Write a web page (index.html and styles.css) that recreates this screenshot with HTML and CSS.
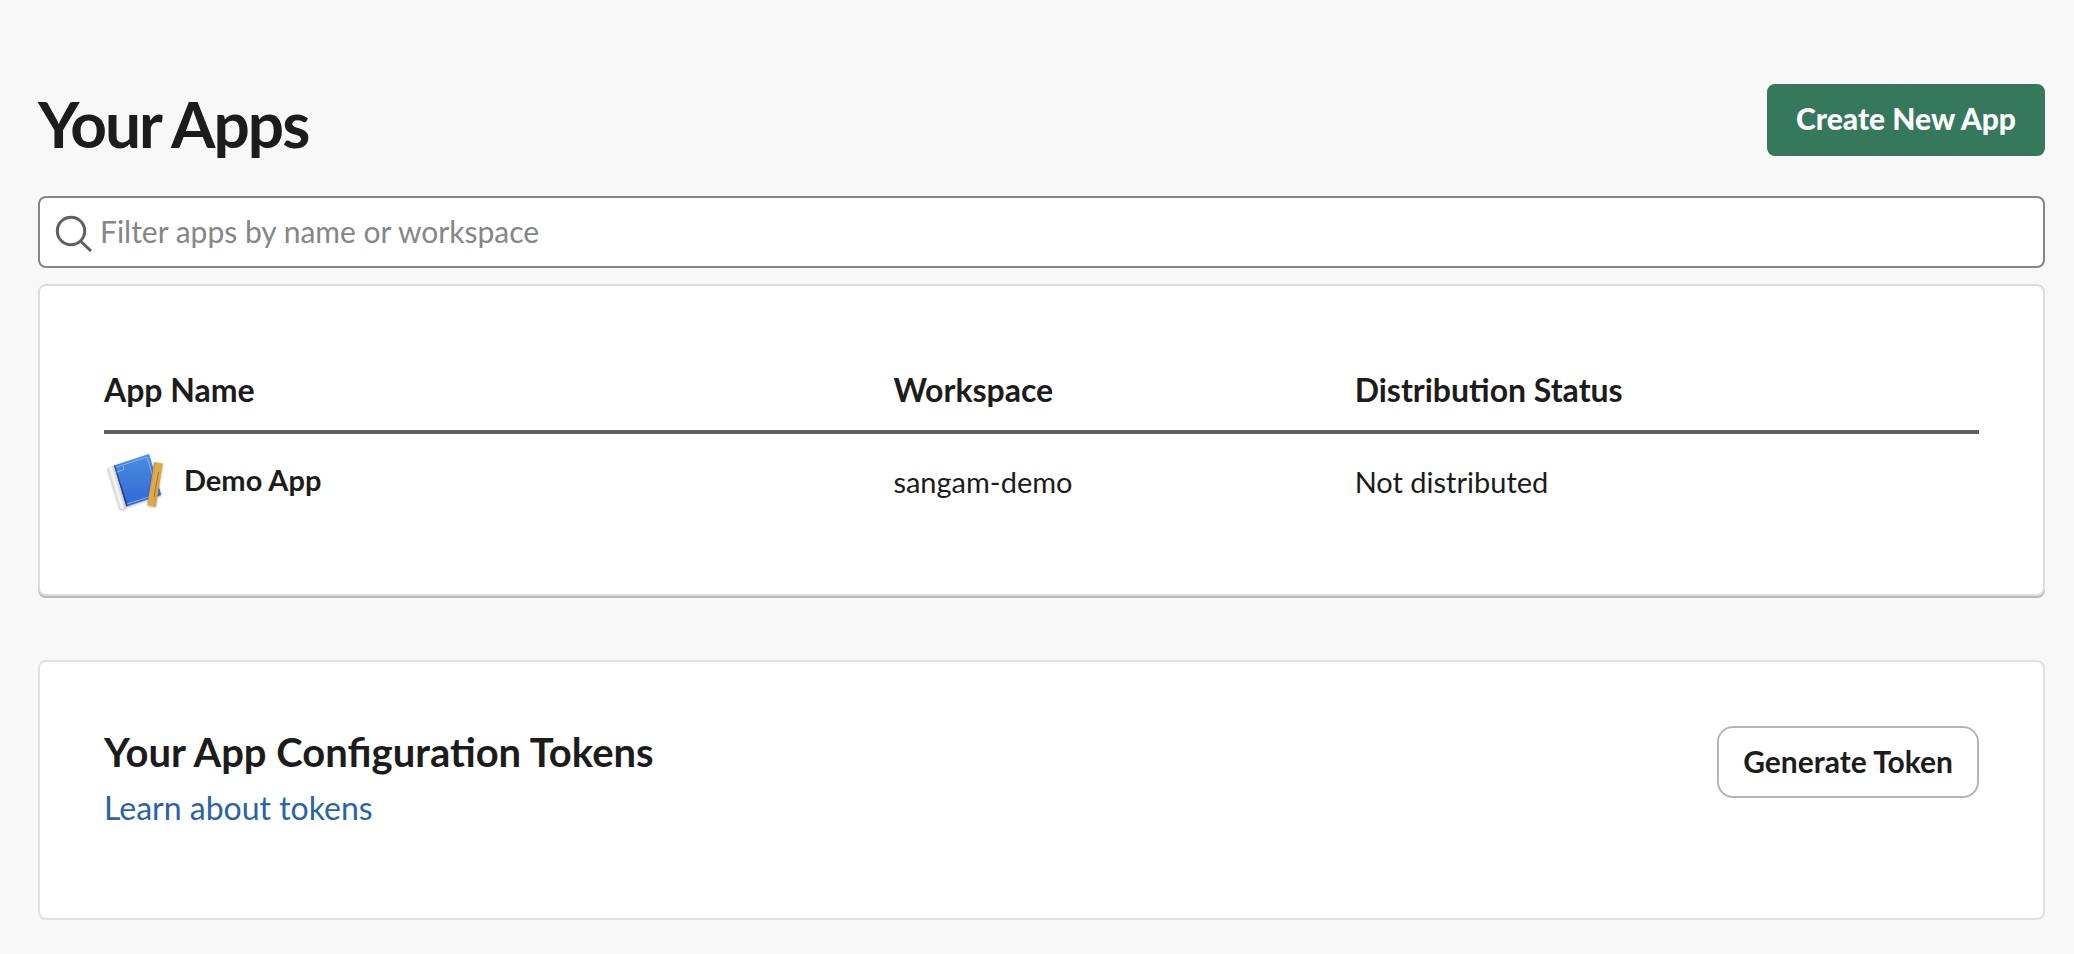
FILE: index.html
```html
<!DOCTYPE html>
<html lang="en">
<head>
    <meta charset="UTF-8">
    <meta name="viewport" content="width=device-width, initial-scale=1.0">
    <title>Your Apps</title>
    <link rel="stylesheet" href="styles.css">
</head>
<body>
    <header class="page-header">
        <h1>Your Apps</h1>
        <button type="button" class="btn btn-primary">Create New App</button>
    </header>

    <main>
        <label class="search" for="appFilter">
            <svg class="search-icon" viewBox="0 0 40 40" role="img" aria-label="Filter apps">
                <circle cx="17" cy="19" r="13.7"/>
                <path d="M26.500 29 37 39"/>
            </svg>
            <input type="text" id="appFilter" placeholder="Filter apps by name or workspace">
        </label>

        <section class="card card-raised">
            <table class="apps-table">
                <thead>
                    <tr>
                        <th class="col-name">App Name</th>
                        <th class="col-workspace">Workspace</th>
                        <th>Distribution Status</th>
                    </tr>
                </thead>
                <tbody>
                    <tr>
                        <td class="app-cell">
                            <a href="#" class="app-link">
                                <svg class="app-icon" viewBox="0 0 64 64" aria-hidden="true">
                                    <defs>
                                        <linearGradient id="cover" x1="0" y1="0" x2="0" y2="1">
                                            <stop offset="0" stop-color="#4a8de0"/>
                                            <stop offset="1" stop-color="#3267d6"/>
                                        </linearGradient>
                                        <linearGradient id="roll" gradientUnits="userSpaceOnUse" x1="9" y1="39" x2="16" y2="37">
                                            <stop offset="0" stop-color="#d0d0d0"/>
                                            <stop offset="0.5" stop-color="#f8f8f8"/>
                                            <stop offset="1" stop-color="#cccccc"/>
                                        </linearGradient>
                                        <linearGradient id="ruler" gradientUnits="userSpaceOnUse" x1="46" y1="34" x2="55" y2="36">
                                            <stop offset="0" stop-color="#cf9838"/>
                                            <stop offset="0.3" stop-color="#e0ad4c"/>
                                            <stop offset="1" stop-color="#d9a343"/>
                                        </linearGradient>
                                    </defs>
                                    <g class="icon-shadow">
                                        <path d="M3.5 18 10 15.500 22.500 56.500 18.500 59.500 16 59Z" fill="url(#roll)"/>
                                        <path d="M10 15.500 45 4 57.300 45 22.300 56.500Z" fill="url(#cover)"/>
                                    </g>
                                    <path d="M10 15.500 10.800 15.200 24 55.800 22.300 56.500Z" fill="#1f438d"/>
                                    <path d="M13 17 43 7 54 44 23 54M12.500 22 20 19.500 19 15.500" fill="none" stroke="#8fb9f0" stroke-width="0.9"/>
                                    <g class="icon-shadow">
                                        <path d="M50.200 12 58.800 13.500 51.800 56.800 43.300 55Z" fill="url(#ruler)"/>
                                    </g>
                                    <path d="M54.500 22 50 47" stroke="#94713a" stroke-width="0.9"/>
                                </svg>
                                <span class="app-name">Demo App</span>
                            </a>
                        </td>
                        <td>sangam-demo</td>
                        <td>Not distributed</td>
                    </tr>
                </tbody>
            </table>
        </section>

        <section class="card tokens">
            <div class="tokens-text">
                <h2>Your App Configuration Tokens</h2>
                <a href="#" class="learn-link">Learn about tokens</a>
            </div>
            <button type="button" class="btn btn-outline">Generate Token</button>
        </section>
    </main>
</body>
</html>
```
FILE: styles.css
```css
* {
    box-sizing: border-box;
}

body {
    font-family: Lato, sans-serif;
    font-size: 29px;
    line-height: 48px;
    background: #f8f8f8;
    margin: 0;
    padding: 84px 29px 32px 38px;
    color: #1d1c1d;
}

.page-header {
    display: flex;
    justify-content: space-between;
    align-items: flex-start;
    margin-bottom: 32px;
}

h1 {
    margin: 0;
    font-size: 64px;
    line-height: 80px;
    font-weight: 700;
    letter-spacing: -2px;
}

.btn {
    height: 72px;
    padding: 0 24px 2px;
    border: 2px solid transparent;
    font-family: inherit;
    font-size: 30px;
    white-space: nowrap;
    cursor: pointer;
}

.btn-primary {
    padding: 0 27px 4px;
    border-color: #35785b;
    border-radius: 8px;
    background: #35785b;
    color: #fff;
    font-weight: 900;
}

.btn-outline {
    border-color: #b5b5b5;
    border-radius: 16px;
    background: #fff;
    color: #1d1c1d;
    font-weight: 700;
}

.search {
    display: flex;
    align-items: center;
    gap: 6px;
    height: 72px;
    margin-bottom: 16px;
    padding: 0 14px;
    border: 2px solid #868686;
    border-radius: 8px;
    background: #fff;
}

.search-icon {
    width: 40px;
    height: 40px;
    fill: none;
    stroke: #616061;
    stroke-width: 3;
}

.search input {
    flex: 1;
    height: 48px;
    padding: 0 0 2px;
    border: none;
    outline: none;
    background: none;
    font-family: inherit;
    font-size: 30px;
    color: #1d1c1d;
}

.search input::placeholder {
    color: #868686;
    opacity: 1;
}

.card {
    margin-bottom: 64px;
    padding: 64px;
    border: 2px solid #e1e1e1;
    border-radius: 8px;
    background: #fff;
}

.card-raised {
    border-color: #dddddd;
    box-shadow: 0 2px 0 #b9b9b9;
}

.apps-table {
    width: 100%;
    border-spacing: 0;
    table-layout: fixed;
}

.apps-table th {
    padding: 16px 0;
    border-bottom: 4px solid #616061;
    font-size: 32px;
    font-weight: 700;
    text-align: left;
}

.col-name {
    width: 42.1%;
}

.col-workspace {
    width: 24.6%;
}

.apps-table td {
    padding: 24px 0;
    vertical-align: top;
}

.apps-table .app-cell {
    padding: 16px 0;
}

.app-link {
    display: flex;
    align-items: center;
    gap: 16px;
    color: inherit;
    font-weight: 700;
    text-decoration: none;
}

.app-icon {
    width: 64px;
    height: 64px;
}

.app-name {
    padding-bottom: 4px;
}

.icon-shadow {
    filter: drop-shadow(0 1px 1px rgba(0, 0, 0, 0.3));
}

.tokens {
    display: flex;
    justify-content: space-between;
    align-items: flex-start;
    margin-bottom: 0;
}

.tokens-text {
    padding-bottom: 22px;
}

h2 {
    margin: 0 0 6px;
    font-size: 40px;
    line-height: 52px;
    font-weight: 700;
}

.learn-link {
    display: block;
    font-size: 32px;
    color: #2864a6;
    text-decoration: none;
}
```
